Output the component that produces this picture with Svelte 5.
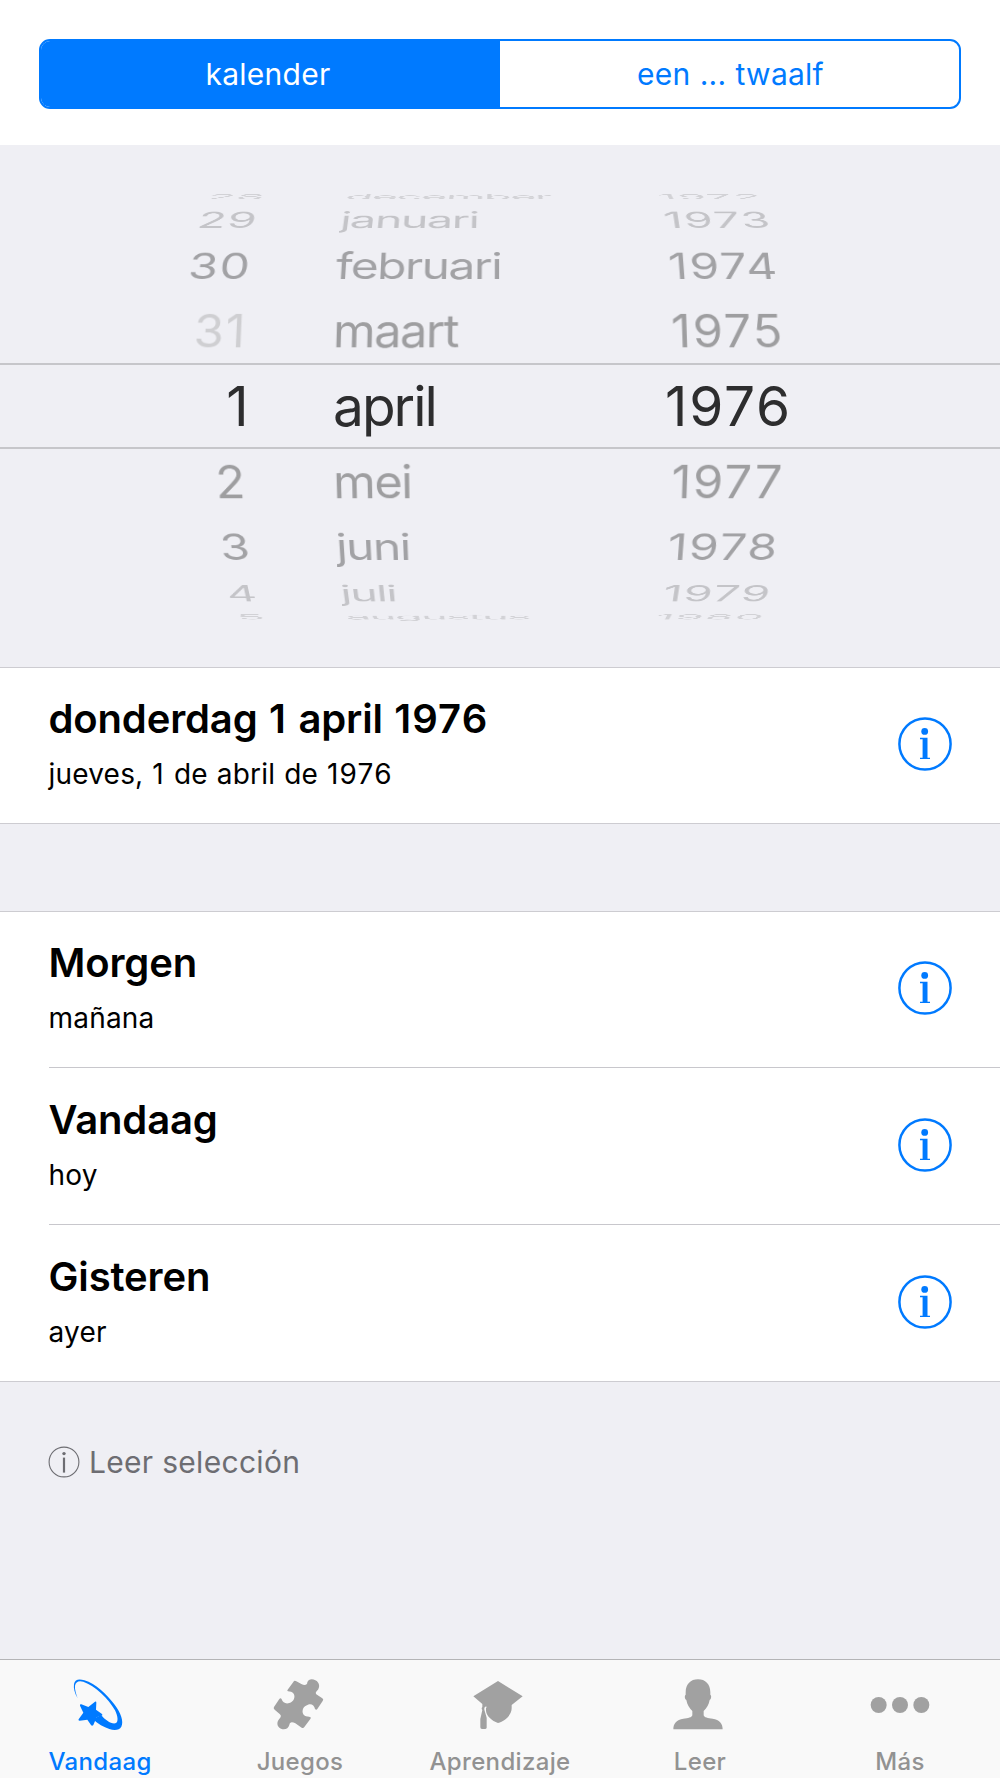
<script>
  const segments = ['kalender', 'een ... twaalf'];
  let active = $state(0);
  let tab = $state('Vandaag');

  const wheels = [
    { name: 'day', items: ['28', '29', '30', '31', '1', '2', '3', '4', '5'], invalid: ['31'] },
    {
      name: 'month',
      items: ['december', 'januari', 'februari', 'maart', 'april', 'mei', 'juni', 'juli', 'augustus'],
      invalid: []
    },
    {
      name: 'year',
      items: ['1972', '1973', '1974', '1975', '1976', '1977', '1978', '1979', '1980'],
      invalid: []
    }
  ];
  const step = 18.7;

  const groups = [
    [{ title: 'donderdag 1 april 1976', sub: 'jueves, 1 de abril de 1976' }],
    [
      { title: 'Morgen', sub: 'mañana' },
      { title: 'Vandaag', sub: 'hoy' },
      { title: 'Gisteren', sub: 'ayer' }
    ]
  ];

  const tabs = ['Vandaag', 'Juegos', 'Aprendizaje', 'Leer', 'Más'];

  // Splits a phrase so that its numbers can be spaced a little wider.
  const parts = (text) => text.split(/(\d+)/).filter(Boolean);
</script>

{#snippet phrase(text)}
  {#each parts(text) as part}<span class:num={/^\d/.test(part)}>{part}</span>{/each}
{/snippet}

<div class="screen">
  <header>
    <div class="segmented">
      {#each segments as label, i}
        <button class:on={active === i} onclick={() => (active = i)}><span>{label}</span></button>
      {/each}
    </div>
  </header>

  <section class="picker">
    <div class="band"></div>
    <div class="drum">
      {#each wheels as wheel}
        {#each wheel.items as item, i}
          <div
            class="cell {wheel.name} d{Math.abs(i - 4)}"
            class:invalid={wheel.invalid.includes(item)}
            style="--angle: {(4 - i) * step}deg"
          >
            <span>{item}</span>
          </div>
        {/each}
      {/each}
    </div>
  </section>

  {#each groups as rows}
    <ul class="group">
      {#each rows as row}
        <li>
          <div class="copy">
            <p class="title">{@render phrase(row.title)}</p>
            <p class="sub">{@render phrase(row.sub)}</p>
          </div>
          <svg class="info" viewBox="0 0 54 54" aria-hidden="true">
            <circle cx="27" cy="27" r="25.6" fill="none" stroke="currentColor" stroke-width="2.5" />
            <circle cx="26.7" cy="14.4" r="3.4" />
            <path d="M22 20.8h7.5v19.9h2.5v1.4H22v-1.4h2.6V22.2H22z" />
          </svg>
        </li>
      {/each}
    </ul>
  {/each}

  <p class="hint">
    <svg viewBox="0 0 32 32" aria-hidden="true">
      <circle cx="16" cy="16" r="14.9" fill="none" stroke="currentColor" stroke-width="1.1" />
      <circle cx="16" cy="7.6" r="1.7" />
      <path d="M14.9 11.6h2.2v15h-2.2z" />
    </svg>
    <span>Leer selección</span>
  </p>

  <nav>
    {#each tabs as name, i}
      <button class="tab t{i}" class:current={tab === name} onclick={() => (tab = name)}>
        <svg viewBox="0 0 150 153" aria-hidden="true">
          {#if i === 0}
            <path
              d="M14 58C5 43 1 27 3 15C6 0 19-1 34 4C68 14 103 48 125 77C143 101 153 127 145 143C139 154 124 155 109 150C92 145 75 135 60 121L84 108C96 122 113 135 127 133C137 130 135 112 126 94C107 59 66 20 31 8C17 4 8 8 6 20C5 32 9 44 14 58Z"
            />
            <path
              d="M66 68Q70 66 70 71L69 92L86 104Q91 108 85 110L71 115L61 138Q57 143 54 138L43 122L20 125Q14 124 18 119L31 101L21 80Q20 75 25 76L46 84Z"
            />
          {:else if i === 1}
            <path
              d="M61 9Q64 3 70 7L85 15C95 21 103 18 103 10C106 0 118-1 127 4C140 10 141 24 135 32C128 39 126 42 132 47L148 58Q153 62 149 66L133 90Q130 94 126 90C124 79 115 73 105 77C91 81 85 94 91 106C95 113 103 112 111 114Q116 116 112 120L94 144Q91 149 86 146L67 133C57 127 50 129 49 138C46 149 35 154 24 149C13 144 10 132 17 122C24 114 26 111 20 105L5 92Q0 88 3 84L19 60Q23 55 26 61C29 71 39 76 49 72C62 68 68 54 62 44C58 38 51 38 45 37Q41 35 44 32Z"
            />
          {:else if i === 2}
            <path
              d="M75 6L149 52L116 78V88C116 108 96 126 75 132C56 125 41 112 39 96V87Q42 85 39 82L34 86V92L41 116V146Q40 150 36 150H27Q22 150 22 145V120L28 93Q24 88 28 84V75L1 52Z"
            />
          {:else if i === 3}
            <path
              d="M75 1C97 1 112 15 112 40V47C116 49 115 60 110 63C107 78 101 88 92 96V108C93 116 105 117 119 119C139 122 149 133 149 151H1C1 133 11 122 31 119C45 117 57 116 58 108V96C49 88 43 78 40 63C35 60 34 49 38 47V40C38 15 53 1 75 1Z"
            />
          {:else}
            <circle cx="11" cy="78" r="24" />
            <circle cx="75" cy="78" r="24" />
            <circle cx="139" cy="78" r="24" />
          {/if}
        </svg>
        <span>{name}</span>
      </button>
    {/each}
  </nav>
</div>

<style>
  :global(body) {
    margin: 0;
    background: #efeff4;
  }
  .screen {
    width: 1000px;
    height: 1778px;
    display: flex;
    flex-direction: column;
    overflow: hidden;
    background: #efeff4;
    color: #000;
    font-family: Inter, 'Liberation Sans', sans-serif;
  }
  button {
    margin: 0;
    padding: 0;
    border: 0;
    background: none;
    font: inherit;
    letter-spacing: inherit;
    word-spacing: inherit;
    color: inherit;
  }
  p {
    margin: 0;
  }
  svg {
    fill: currentColor;
    flex: none;
  }

  header {
    box-sizing: border-box;
    flex: none;
    height: 145px;
    padding: 39px 39px 36px;
    background: #fff;
  }
  .segmented {
    box-sizing: border-box;
    display: grid;
    grid-template-columns: 1fr 1fr;
    height: 70px;
    border: 2.6px solid #007aff;
    border-radius: 11px;
    overflow: hidden;
    color: #007aff;
    background: #fff;
    font-size: 30px;
    letter-spacing: 0.25px;
    word-spacing: 0.5px;
  }
  .segmented button + button {
    padding-left: 2px;
  }
  .segmented .on {
    padding-right: 5px;
    background: #007aff;
    color: #fff;
  }

  .picker {
    position: relative;
    flex: none;
    height: 522px;
    perspective: 1975px;
    overflow: hidden;
  }
  .band {
    position: absolute;
    top: 218px;
    left: 0;
    right: 0;
    height: 82px;
    border: solid #c6c6ca;
    border-width: 2px 0;
  }
  .drum {
    position: absolute;
    inset: 0;
    transform-style: preserve-3d;
    transform: translateZ(-237px);
  }
  .cell {
    position: absolute;
    top: 220.5px;
    height: 82px;
    line-height: 82px;
    font-size: 49px;
    color: #9e9ea0;
    white-space: nowrap;
    transform: rotateX(var(--angle)) translateZ(237px);
    backface-visibility: hidden;
  }
  .day {
    left: 100px;
    width: 145px;
    text-align: right;
    letter-spacing: 1.4px;
  }
  .month {
    left: 332px;
    width: 260px;
    letter-spacing: -1.5px;
  }
  .year {
    left: 628.5px;
    width: 200px;
    text-align: center;
    letter-spacing: 1.8px;
  }
  .d0 {
    top: 220px;
    font-size: 55px;
    color: #2d2d2e;
  }
  .d0.month {
    left: 333px;
    letter-spacing: -2px;
  }
  .d0.day {
    width: 150px;
  }
  .d2 {
    color: #a2a2a5;
  }
  .d3 {
    color: #c4c4c8;
  }
  .d4 {
    color: #d2d2d6;
  }
  .invalid {
    color: #cfcfd2;
  }

  .group {
    flex: none;
    margin: 0 0 87px;
    padding: 0;
    list-style: none;
    background: #fff;
    border: solid #cdccd1;
    border-width: 1px 0;
  }
  .group + .hint {
    margin-top: -87px;
  }
  li {
    display: flex;
    align-items: flex-start;
    justify-content: space-between;
    height: 155px;
    padding-right: 48px;
    margin-left: 48.5px;
    box-sizing: border-box;
  }
  li + li {
    height: 157px;
    padding-top: 1px;
    border-top: 1px solid #c8c7cc;
  }
  .title {
    margin-top: 26px;
    font-size: 40px;
    line-height: 50px;
    font-weight: 600;
    letter-spacing: -0.15px;
    word-spacing: 1.5px;
  }
  .title .num {
    letter-spacing: 1.1px;
  }
  .sub {
    margin-top: 10.4px;
    font-size: 28px;
    line-height: 40px;
    letter-spacing: 0.2px;
    word-spacing: 0.9px;
  }
  .sub .num {
    letter-spacing: 1.2px;
  }
  .info {
    width: 54px;
    height: 54px;
    margin-top: 49px;
    color: #007aff;
  }

  .hint {
    display: flex;
    align-items: center;
    gap: 9px;
    padding: 60px 48px 0;
    font-size: 30px;
    line-height: 40px;
    letter-spacing: 0.3px;
    color: #6d6d72;
  }
  .hint svg {
    width: 32px;
    height: 32px;
  }

  nav {
    box-sizing: border-box;
    flex: none;
    display: grid;
    grid-template-columns: repeat(5, 1fr);
    height: 119.5px;
    margin-top: auto;
    border-top: 1.4px solid #b4b4b6;
    background: #f9f9f9;
    color: #929292;
  }
  .tab {
    display: flex;
    flex-direction: column;
    align-items: center;
    padding-top: 19.5px;
    font-size: 24px;
    line-height: 30px;
    font-weight: 450;
    letter-spacing: 0.35px;
  }
  .tab svg {
    width: 50px;
    height: 51px;
    margin: 0 4px 16.5px 0;
    color: #a1a1a1;
    overflow: visible;
  }
  .t4 svg {
    margin-right: 0;
  }
  .tab.current,
  .tab.current svg {
    color: #007aff;
  }
</style>
